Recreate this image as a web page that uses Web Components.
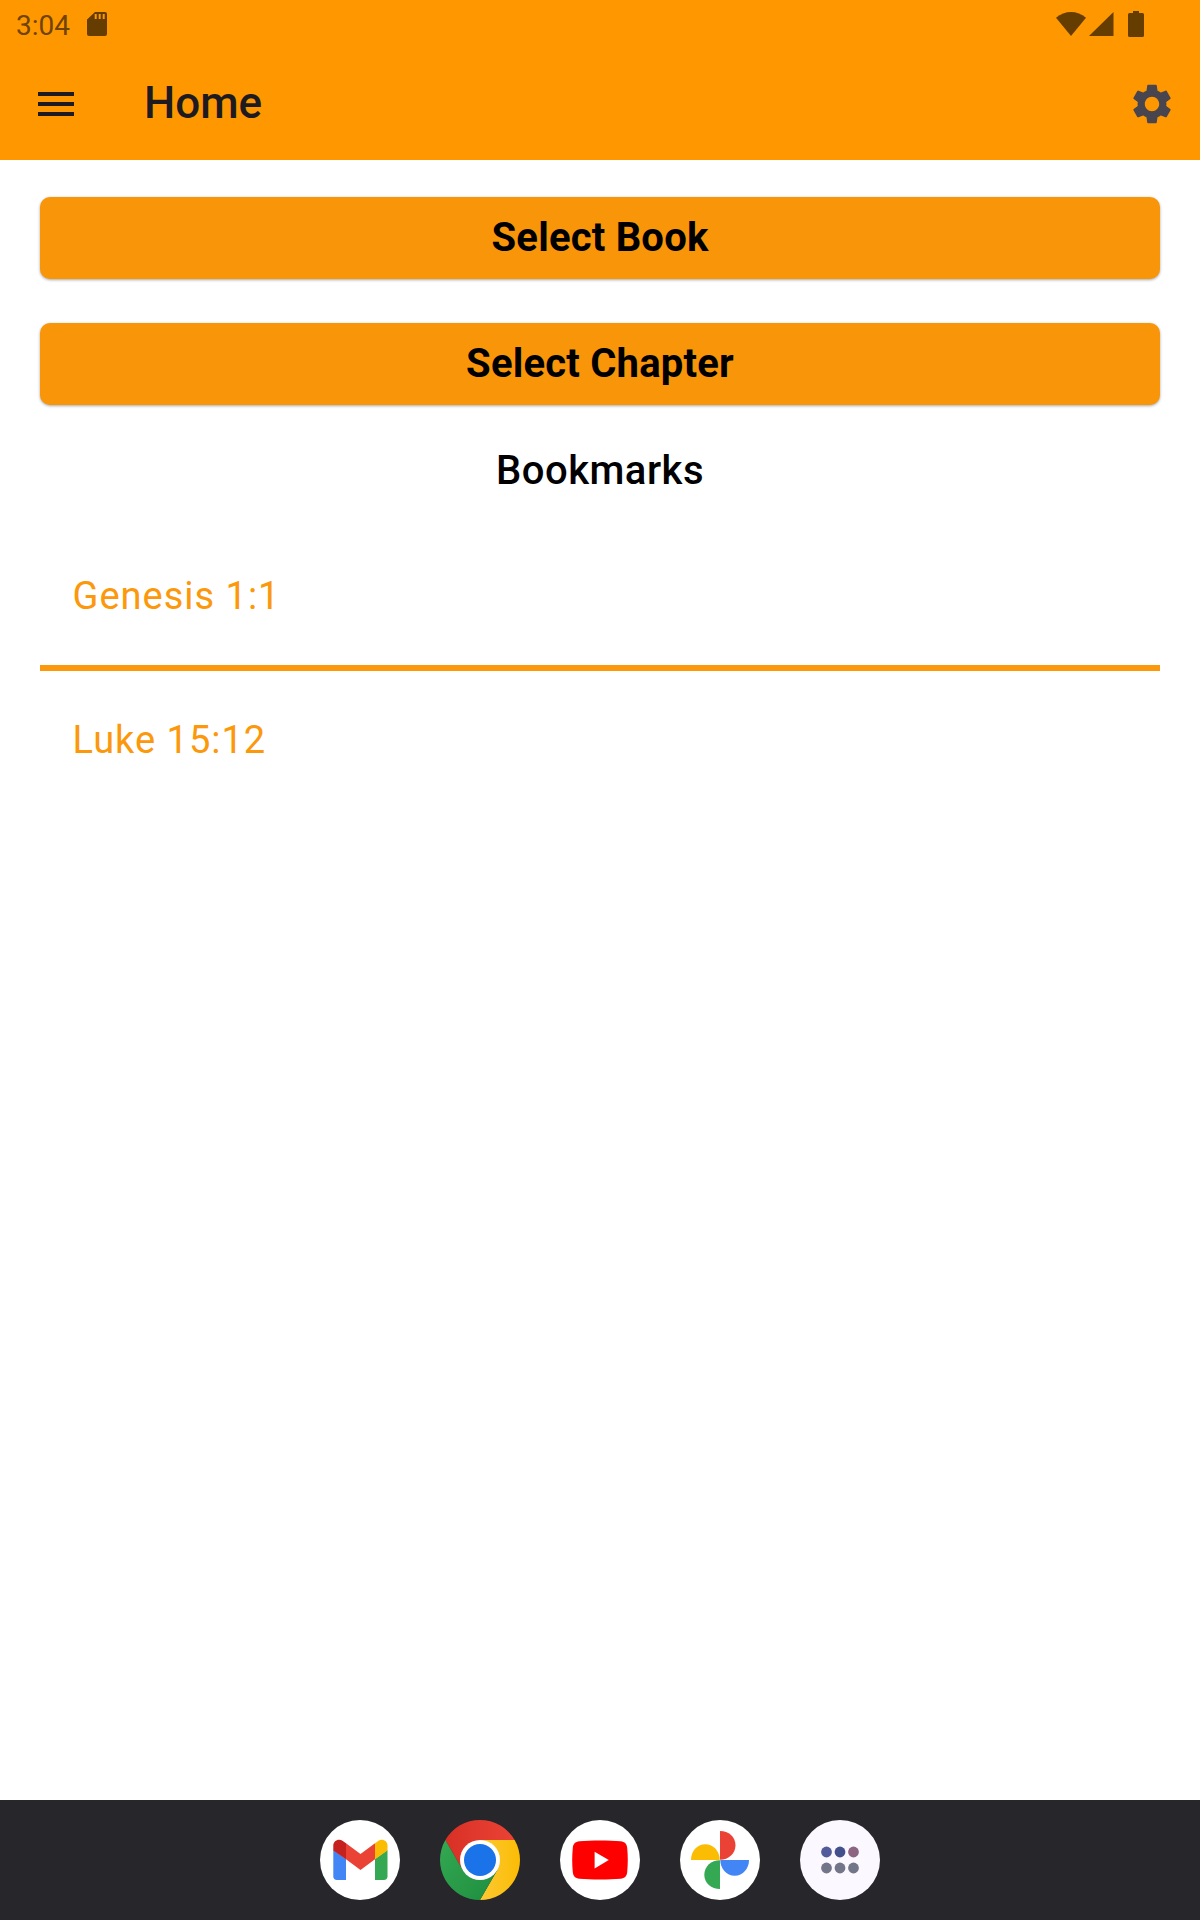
<!DOCTYPE html>
<html lang="en">
<head>
<meta charset="utf-8">
<title>Home</title>
<style>
    body {
        margin: 0;
        background: #fff;
        font-family: Roboto, "Liberation Sans", sans-serif;
    }
</style>
</head>
<body>
<home-page></home-page>

<script>
const define = (name, html) => {
    const template = document.createElement("template");
    template.innerHTML = html;

    customElements.define(name, class extends HTMLElement {
        constructor() {
            super();
            this.attachShadow({ mode: "open" });
            this.shadowRoot.appendChild(template.content.cloneNode(true));
        }
    });
};

define("status-bar", `
    <style>
        :host {
            display: flex;
            align-items: center;
            height: 48px;
            padding: 0 56px 0 16px;
            box-sizing: border-box;
            color: #663d00;
            font-size: 28px;
            line-height: 46px;
        }
        .clock { margin-right: 17px; padding-top: 4px; color: #704300; }
        .end { margin-left: auto; }
        svg { display: block; fill: currentColor; }
    </style>
    <span class="clock">3:04</span>
    <svg width="20" height="24" viewBox="0 0 20 24">
        <path fill-rule="evenodd" d="M8 0h10a2 2 0 0 1 2 2v20a2 2 0 0 1-2 2H2a2 2 0 0 1-2-2V7.5zM7.7 2v5h2V2zm4 0v5h2V2zm4 0v5h2V2z"/>
    </svg>
    <div class="end">
        <svg width="88" height="26" viewBox="0 0 88 26">
            <path d="M0 6.8C8.8-1 21.2-1 30 6.8L15 25z"/>
            <path d="M57.5 1v24H33z"/>
            <path d="M77 0h6v2h3.5A1.5 1.5 0 0 1 88 3.5v21a1.5 1.5 0 0 1-1.5 1.5h-13a1.5 1.5 0 0 1-1.5-1.5v-21A1.5 1.5 0 0 1 73.5 2H77z"/>
        </svg>
    </div>
`);

define("app-bar", `
    <style>
        :host {
            display: flex;
            align-items: center;
            height: 112px;
            padding: 0 24px 0 32px;
            box-sizing: border-box;
            color: #1d1b20;
        }
        svg { display: block; width: 48px; height: 48px; fill: currentColor; }
        .settings { margin-left: auto; color: #49454f; }
        h1 {
            margin: 0 0 2px 64px;
            font-size: 44px;
            font-weight: 500;
            line-height: 56px;
        }
    </style>
    <svg viewBox="0 0 24 24"><path d="M3 18h18v-2H3v2zm0-5h18v-2H3v2zm0-7v2h18V6H3z"/></svg>
    <h1><slot></slot></h1>
    <svg class="settings" viewBox="0 0 24 24">
        <path d="M19.14 12.94c.04-.3.06-.61.06-.94 0-.32-.02-.64-.07-.94l2.03-1.58c.18-.14.23-.41.12-.61l-1.92-3.32c-.12-.22-.37-.29-.59-.22l-2.39.96c-.5-.38-1.03-.7-1.62-.94l-.36-2.54c-.04-.24-.24-.41-.48-.41h-3.84c-.24 0-.43.17-.47.41l-.36 2.54c-.59.24-1.13.57-1.62.94l-2.39-.96c-.22-.08-.47 0-.59.22L2.74 8.87c-.12.21-.08.47.12.61l2.03 1.58c-.05.3-.09.63-.09.94s.02.64.07.94l-2.03 1.58c-.18.14-.23.41-.12.61l1.92 3.32c.12.22.37.29.59.22l2.39-.96c.5.38 1.03.7 1.62.94l.36 2.54c.05.24.24.41.48.41h3.84c.24 0 .44-.17.47-.41l.36-2.54c.59-.24 1.13-.56 1.62-.94l2.39.96c.22.08.47 0 .59-.22l1.92-3.32c.12-.22.07-.47-.12-.61l-2.01-1.58zM12 15.6c-1.98 0-3.6-1.62-3.6-3.6s1.62-3.6 3.6-3.6 3.6 1.62 3.6 3.6-1.62 3.6-3.6 3.6z"/>
    </svg>
`);

define("select-button", `
    <style>
        :host { display: block; }
        button {
            display: block;
            width: 100%;
            height: 82px;
            padding: 0;
            border: 0;
            border-radius: 10px;
            background: #f99509;
            box-shadow: 0 1px 3px rgba(0, 0, 0, .35);
            color: #000;
            font: 700 40px/82px Roboto, "Liberation Sans", sans-serif;
            letter-spacing: .2px;
        }
    </style>
    <button><slot></slot></button>
`);

define("bookmark-item", `
    <style>
        :host {
            display: block;
            padding: 0 32.5px;
            height: 138px;
            color: #fb980c;
            font-size: 38px;
            line-height: 138px;
            letter-spacing: 1px;
        }
    </style>
    <slot></slot>
`);

define("bookmark-list", `
    <style>
        :host { display: block; }
        h2 {
            margin: 0 0 34px;
            font-size: 40px;
            font-weight: 500;
            line-height: 44px;
            letter-spacing: .5px;
            text-align: center;
        }
        ::slotted(bookmark-item:not(:last-child)) { border-bottom: 6px solid #fb980c; }
    </style>
    <h2>Bookmarks</h2>
    <slot></slot>
`);

define("dock-bar", `
    <style>
        :host {
            display: flex;
            align-items: center;
            justify-content: center;
            gap: 40px;
            height: 120px;
            background: #27262b;
        }
        svg { display: block; width: 80px; height: 80px; }
    </style>
    <svg viewBox="0 0 80 80">
        <circle cx="40" cy="40" r="40" fill="#fff"/>
        <path fill="#4285f4" d="M13.3 30 26 39v21h-9a3.7 3.7 0 0 1-3.7-3.7z"/>
        <path fill="#34a853" d="M67.5 30 55 39v21h8.8a3.7 3.7 0 0 0 3.7-3.7z"/>
        <path fill="#ea4335" d="M26 23.2 40.5 34 55 23.2v16L40.5 50 26 39.2z"/>
        <path fill="#c5221f" d="M13.3 25.5c0-5 5.5-7.5 9.5-4.6l3.2 2.3v16l-12.7-8.7z"/>
        <path fill="#fbbc04" d="M67.5 25.5c0-5-5.5-7.5-9.3-4.6L55 23.2v16l12.5-8.7z"/>
    </svg>
    <svg viewBox="0 0 80 80">
        <defs>
            <linearGradient id="r"><stop stop-color="#d93025"/><stop offset="1" stop-color="#ea4335"/></linearGradient>
            <linearGradient id="y"><stop stop-color="#fcc934"/><stop offset="1" stop-color="#fbbc04"/></linearGradient>
            <linearGradient id="g" x1="1" y1="1" x2="0" y2="0"><stop stop-color="#1e8e3e"/><stop offset="1" stop-color="#34a853"/></linearGradient>
        </defs>
        <path fill="url(#r)" d="M5.36 20a40 40 0 0 1 69.28 0H40L22.68 50z"/>
        <path fill="url(#y)" d="M74.64 20A40 40 0 0 1 40 80L57.32 50 40 20z"/>
        <path fill="url(#g)" d="M40 80A40 40 0 0 1 5.36 20L22.68 50h34.64z"/>
        <circle cx="40" cy="40" r="20" fill="#fff"/>
        <circle cx="40" cy="40" r="16" fill="#1a73e8"/>
    </svg>
    <svg viewBox="0 0 80 80">
        <circle cx="40" cy="40" r="40" fill="#fff"/>
        <path fill="#f00" d="M19.5 21.3C30 20.2 50 20.2 60.5 21.3c4.5.4 6.3 2.7 6.7 6.7.8 8 .8 16 0 24-.4 4-2.2 6.3-6.7 6.7-10.5 1.1-30.5 1.1-41 0-4.5-.4-6.3-2.7-6.7-6.7-.8-8-.8-16 0-24 .4-4 2.2-6.3 6.7-6.7z"/>
        <path fill="#fff" d="M34.6 31.8v16.6l14.2-8.3z"/>
    </svg>
    <svg viewBox="0 0 80 80">
        <circle cx="40" cy="40" r="40" fill="#fff"/>
        <path fill="#ea4335" d="M40 11c8.7 0 15.5 6 15.5 14.2S48.7 39.7 40 39.7z"/>
        <path fill="#4285f4" d="M69 40c0 8.700-6 15.700-14.300 15.700S40.300 48.700 40.300 40z"/>
        <path fill="#34a853" d="M40 69c-8.700 0-15.700-6-15.700-14.300S31.300 40.300 40 40.300z"/>
        <path fill="#fbbc04" d="M11 40c0-8.700 6-15.700 14.300-15.700S39.700 31.300 39.700 40z"/>
    </svg>
    <svg viewBox="0 0 80 80">
        <circle cx="40" cy="40" r="40" fill="#fcf8ff"/>
        <g fill="#737688">
            <circle cx="26.5" cy="32" r="5.4" fill="#525c9a"/>
            <circle cx="40" cy="32" r="5.4" fill="#43508c"/>
            <circle cx="53.5" cy="32" r="5.4" fill="#8d6582"/>
            <circle cx="26.5" cy="48" r="5.4"/>
            <circle cx="40" cy="48" r="5.4"/>
            <circle cx="53.5" cy="48" r="5.4"/>
        </g>
    </svg>
`);

define("home-page", `
    <style>
        :host { display: flex; flex-direction: column; height: 1920px; }
        header { background: #ff9800; }
        main {
            flex: 1;
            display: flex;
            flex-direction: column;
            gap: 44px;
            padding: 37px 40px 0;
        }
    </style>
    <header>
        <status-bar></status-bar>
        <app-bar>Home</app-bar>
    </header>
    <main>
        <select-button>Select Book</select-button>
        <select-button>Select Chapter</select-button>
        <bookmark-list>
            <bookmark-item>Genesis 1:1</bookmark-item>
            <bookmark-item>Luke 15:12</bookmark-item>
        </bookmark-list>
    </main>
    <dock-bar></dock-bar>
`);
</script>
</body>
</html>
